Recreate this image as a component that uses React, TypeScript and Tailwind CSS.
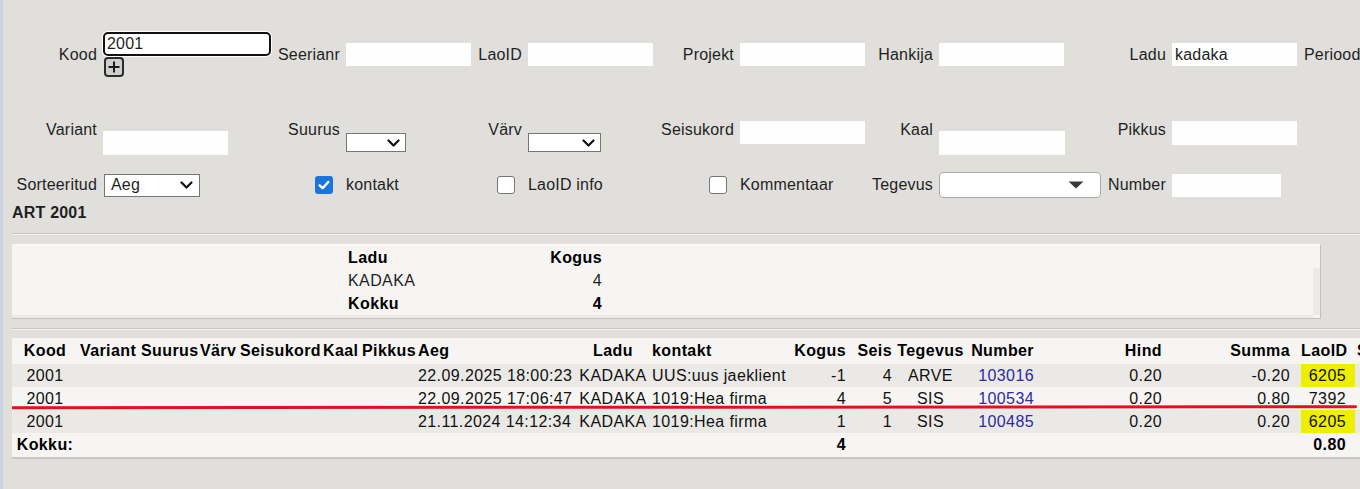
import React from "react";

type Row = {
  aeg: string;
  kontakt: string;
  kogus: string;
  seis: string;
  tegevus: string;
  number: string;
  hind: string;
  summa: string;
  laoId: string;
  yellow: boolean;
};

const rows: Row[] = [
  { aeg: "22.09.2025 18:00:23", kontakt: "UUS:uus jaeklient", kogus: "-1", seis: "4", tegevus: "ARVE", number: "103016", hind: "0.20", summa: "-0.20", laoId: "6205", yellow: true },
  { aeg: "22.09.2025 17:06:47", kontakt: "1019:Hea firma", kogus: "4", seis: "5", tegevus: "SIS", number: "100534", hind: "0.20", summa: "0.80", laoId: "7392", yellow: false },
  { aeg: "21.11.2024 14:12:34", kontakt: "1019:Hea firma", kogus: "1", seis: "1", tegevus: "SIS", number: "100485", hind: "0.20", summa: "0.20", laoId: "6205", yellow: true },
];

// same column template for every filter row
const gridCols = "grid grid-cols-[100px_169px_74px_128px_54px_128px_84px_128px_71px_164px_69px_128px_1fr]";
const labelStyle = "text-right pr-[6px] whitespace-nowrap";
const inputBase = "h-[23px] bg-[#fdfefd] pl-[3px] leading-[23px]";
const inputStyle = `${inputBase} w-[125px]`;
const th = "h-[26px] p-0 font-bold whitespace-nowrap";
const td = "h-[23px] p-0 whitespace-nowrap";

const Chevron = () => (
  <svg width="13" height="8" viewBox="0 0 13 8" fill="none">
    <path d="M1.5 1.5L6.5 6.5L11.5 1.5" stroke="#111" strokeWidth="2.2" strokeLinecap="round" strokeLinejoin="round" />
  </svg>
);

const Checkbox = ({ checked }: { checked?: boolean }) =>
  checked ? (
    <div className="w-[18px] h-[18px] rounded-[3px] bg-[#1a74db] flex items-center justify-center">
      <svg width="14" height="14" viewBox="0 0 14 14" fill="none">
        <path d="M2.6 7.3L5.6 10.2L11.4 3.9" stroke="#fff" strokeWidth="2.3" strokeLinecap="round" strokeLinejoin="round" />
      </svg>
    </div>
  ) : (
    <div className="w-[18px] h-[18px] rounded-[3px] border border-[#767676] bg-white" />
  );

const PlusBox = () => (
  <svg width="20" height="20" viewBox="0 0 20 20" className="ml-[1px]">
    <rect x="1" y="1" width="18" height="18" rx="3" fill="#cfcfcf" stroke="#2b2b2b" strokeWidth="2" />
    <path d="M10 4.5V15.5M4.5 10H15.5" stroke="#1a1a1a" strokeWidth="2" />
  </svg>
);

const App: React.FC = () => {
  return (
    <div className="w-[1360px] h-[489px] overflow-hidden bg-[#e0dfdc] flex font-['Liberation_Sans',Arial,Helvetica,sans-serif] text-[16px] leading-[18px] tracking-[0.2px] text-[#1f1f1f]">
      <div className="w-[3px] h-full bg-[#cad2e3] shrink-0" />
      <div className="flex-1 min-w-0">
        {/* rida 1 */}
        <div className={`${gridCols} mt-[32px] h-[44px] items-center`}>
          <div className={`${labelStyle} pr-[5px]`}>Kood</div>
          <div className="flex flex-col">
            <div className="h-[24px] w-[168px] rounded-[5px] border-2 border-[#111] bg-white pl-[2px] leading-[20px] ring-1 ring-white">2001</div>
            <div className="mt-[1px]"><PlusBox /></div>
          </div>
          <div className={labelStyle}>Seerianr</div>
          <div className={inputStyle} />
          <div className={labelStyle}>LaoID</div>
          <div className={inputStyle} />
          <div className={labelStyle}>Projekt</div>
          <div className={inputStyle} />
          <div className={labelStyle}>Hankija</div>
          <div className={inputStyle} />
          <div className={labelStyle}>Ladu</div>
          <div className={inputStyle}>kadaka</div>
          <div className="pl-[4px] whitespace-nowrap">Perioodi</div>
        </div>

        {/* rida 2 */}
        <div className={`${gridCols} mt-[45px] h-[34px] items-start`}>
          <div className={labelStyle}>Variant</div>
          <div className={`${inputBase} w-[125px] mt-[10px] h-[24px]`} />
          <div className={labelStyle}>Suurus</div>
          <div className="mt-[12px] h-[19px] w-[60px] border border-[#767676] bg-white flex items-center justify-end pr-[5px]">
            <Chevron />
          </div>
          <div className={labelStyle}>Värv</div>
          <div className="mt-[12px] h-[19px] w-[73px] border border-[#767676] bg-white flex items-center justify-end pr-[5px]">
            <Chevron />
          </div>
          <div className={labelStyle}>Seisukord</div>
          <div className={inputStyle} />
          <div className={labelStyle}>Kaal</div>
          <div className={`${inputBase} w-[126px] mt-[10px] h-[24px]`} />
          <div className={labelStyle}>Pikkus</div>
          <div className={`${inputBase} w-[125px] h-[24px]`} />
          <div />
        </div>

        {/* rida 3 */}
        <div className={`${gridCols} mt-[17px] h-[26px] items-center`}>
          <div className={`${labelStyle} pr-[5px]`}>Sorteeritud</div>
          <div className="ml-[1px] h-[23px] w-[96px] border border-[#767676] bg-white flex items-center justify-between pl-[6px] pr-[6px]">
            <span>Aeg</span>
            <Chevron />
          </div>
          <div className="flex justify-end pr-[13px]"><Checkbox checked /></div>
          <div>kontakt</div>
          <div className="flex justify-end pr-[13px]"><Checkbox /></div>
          <div className="whitespace-nowrap">LaoID info</div>
          <div className="flex justify-end pr-[13px]"><Checkbox /></div>
          <div>Kommentaar</div>
          <div className={labelStyle}>Tegevus</div>
          <div className="h-[26px] w-[162px] rounded-[4px] border border-[#aaa] bg-white flex items-center justify-end pr-[16px]">
            <svg width="16" height="8" viewBox="0 0 16 8">
              <path d="M0.5 0.5H15.5L8 7.5Z" fill="#3a3a3a" />
            </svg>
          </div>
          <div className={labelStyle}>Number</div>
          <div className={`${inputBase} w-[109px]`} />
          <div />
        </div>

        <div className="mt-[6px] ml-[9px] font-bold">ART 2001</div>

        <div className="mt-[11px] ml-[9px] h-[2px] border-t border-[#c8c6c2] bg-[#f3f2f0]" />

        {/* laoseis kokkuvõte */}
        <div className="mt-[9px] ml-[9px] w-[1309px] h-[75px] bg-[#f6f5f3] border-t border-t-[#fbfbf9] border-r border-b border-[#c3c1bd] flex flex-col tracking-[0.4px]">
          <div className="flex-1 flex">
            <div className="flex-1 pt-[1px]">
              <table className="ml-[334px] table-fixed border-collapse w-[258px]">
                <colgroup>
                  <col className="w-[194px]" />
                  <col className="w-[64px]" />
                </colgroup>
                <tbody>
                  <tr>
                    <td className={`${td} pl-[2px] font-bold text-black`}>Ladu</td>
                    <td className={`${td} pr-[2px] text-right font-bold text-black`}>Kogus</td>
                  </tr>
                  <tr>
                    <td className={`${td} pl-[2px]`}>KADAKA</td>
                    <td className={`${td} pr-[2px] text-right`}>4</td>
                  </tr>
                  <tr>
                    <td className={`${td} pl-[2px] font-bold text-black`}>Kokku</td>
                    <td className={`${td} pr-[2px] text-right font-bold text-black`}>4</td>
                  </tr>
                </tbody>
              </table>
            </div>
            <div className="w-[7px] mt-[23px] bg-[#ebeae6]" />
          </div>
          <div className="h-[3px] bg-[#ebeae6] mr-[7px]" />
        </div>

        <div className="mt-[9px] ml-[9px] h-[2px] border-t border-[#c8c6c2] bg-[#f3f2f0]" />

        {/* liikumiste tabel */}
        <div className="relative mt-[8px] ml-[9px] w-[1403px] tracking-[0.4px]">
          <table className="table-fixed border-collapse w-[1403px] text-[#111]">
            <colgroup>
              <col className="w-[66px]" />
              <col className="w-[62px]" />
              <col className="w-[58px]" />
              <col className="w-[40px]" />
              <col className="w-[83px]" />
              <col className="w-[39px]" />
              <col className="w-[56px]" />
              <col className="w-[160px]" />
              <col className="w-[74px]" />
              <col className="w-[141px]" />
              <col className="w-[57px]" />
              <col className="w-[46px]" />
              <col className="w-[73px]" />
              <col className="w-[69px]" />
              <col className="w-[128px]" />
              <col className="w-[137px]" />
              <col className="w-[54px]" />
              <col className="w-[60px]" />
            </colgroup>
            <thead>
              <tr className="bg-[#f6f5f3] text-black">
                <th className={`${th} text-center`}>Kood</th>
                <th className={`${th} text-left pl-[2px]`}>Variant</th>
                <th className={`${th} text-left pl-[1px]`}>Suurus</th>
                <th className={`${th} text-left pl-[2px]`}>Värv</th>
                <th className={`${th} text-left pl-[2px]`}>Seisukord</th>
                <th className={`${th} text-left pl-[2px]`}>Kaal</th>
                <th className={`${th} text-left pl-[2px]`}>Pikkus</th>
                <th className={`${th} text-left pl-[2px]`}>Aeg</th>
                <th className={`${th} text-center`}>Ladu</th>
                <th className={`${th} text-left pl-[2px]`}>kontakt</th>
                <th className={`${th} text-right pr-[2px]`}>Kogus</th>
                <th className={`${th} text-right pr-[2px]`}>Seis</th>
                <th className={`${th} text-center`}>Tegevus</th>
                <th className={`${th} text-right pr-[2px]`}>Number</th>
                <th className={`${th} text-right pr-[2px]`}>Hind</th>
                <th className={`${th} text-right pr-[11px]`}>Summa</th>
                <th className={`${th} text-right pr-[9px]`}>LaoID</th>
                <th className={`${th} text-left pl-[2px]`}>Seerianr</th>
              </tr>
            </thead>
            <tbody>
              {rows.map((r, i) => (
                <tr key={i} className={i % 2 === 0 ? "bg-[#ebe9e6]" : "bg-[#f6f5f3]"}>
                  <td className={`${td} text-center`}>2001</td>
                  <td className={td} />
                  <td className={td} />
                  <td className={td} />
                  <td className={td} />
                  <td className={td} />
                  <td className={td} />
                  <td className={`${td} pl-[2px]`}>{r.aeg}</td>
                  <td className={`${td} text-center`}>KADAKA</td>
                  <td className={`${td} pl-[2px]`}>{r.kontakt}</td>
                  <td className={`${td} text-right pr-[2px]`}>{r.kogus}</td>
                  <td className={`${td} text-right pr-[2px]`}>{r.seis}</td>
                  <td className={`${td} text-center`}>{r.tegevus}</td>
                  <td className={`${td} text-right pr-[2px] text-[#2b2ba6]`}>{r.number}</td>
                  <td className={`${td} text-right pr-[2px]`}>{r.hind}</td>
                  <td className={`${td} text-right pr-[11px]`}>{r.summa}</td>
                  <td className={`${td} text-right pr-[9px] ${r.yellow ? "bg-[#eeee00]" : ""}`}>{r.laoId}</td>
                  <td className={td} />
                </tr>
              ))}
              <tr className="bg-[#f6f5f3] font-bold text-black">
                <td className="h-[24px] p-0 text-center">Kokku:</td>
                <td className="p-0" colSpan={9} />
                <td className="p-0 text-right pr-[2px]">4</td>
                <td className="p-0" colSpan={5} />
                <td className="p-0 text-right pr-[9px]">0.80</td>
                <td className="p-0" />
              </tr>
            </tbody>
          </table>
          <div className="h-[2px] bg-[#c9c7c3]" />
          {/* punane joon üle teise rea */}
          <svg className="absolute left-0 top-0 pointer-events-none" width="1360" height="90" viewBox="0 0 1360 90">
            <path d="M0.5 69.7L1343.5 68.7" stroke="#e4101c" strokeWidth="3" strokeLinecap="round" />
          </svg>
        </div>
      </div>
    </div>
  );
};

export default App;
